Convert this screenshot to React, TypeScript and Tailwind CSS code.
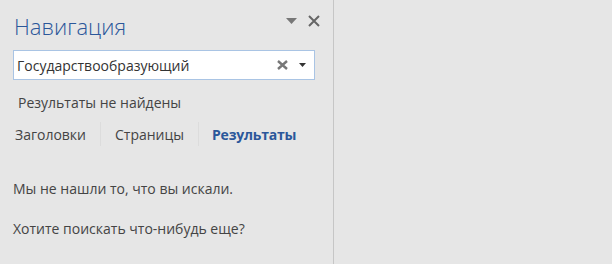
const App = () => {
  return (
    <div className="flex h-[264px] w-[612px] bg-[#e6e6e6] text-[#444]" style={{ fontFamily: '"Open Sans", "Noto Sans", sans-serif' }}>
      {/* Navigation pane */}
      <div className="relative w-[334px] shrink-0 border-r border-[#c6c6c6] pl-[13px]">
        {/* Header */}
        <div className="flex h-[48px] items-start pr-[13px]">
          <h1 className="pl-[1px] pt-[11px] text-[22px] font-light leading-[30px] text-[#2b579a]">Навигация</h1>
          <div className="ml-auto mt-[15px] flex items-center gap-[11px]">
            <svg width="11" height="6" viewBox="0 0 11 6"><path d="M0 0h11L5.5 6z" fill="#777" /></svg>
            <svg width="12" height="12" viewBox="0 0 12 12">
              <path d="M1 1l10 10M11 1L1 11" stroke="#666" strokeWidth="2" />
            </svg>
          </div>
        </div>

        {/* Search box */}
        <div className="mt-[2px] flex h-[30px] w-[302px] items-center border border-[#a9c4e4] bg-white pl-[3px] pr-[8px]">
          <span className="flex-1 text-[14px] text-[#333]">Государствообразующий</span>
          <svg width="11" height="10" viewBox="0 0 11 10" className="mr-[11px]">
            <path d="M1 1l9 8M10 1l-9 8" stroke="#777" strokeWidth="2.4" />
          </svg>
          <svg width="7" height="4" viewBox="0 0 7 4"><path d="M0 0h7L3.5 4z" fill="#333" /></svg>
        </div>

        <div className="mt-[13px] pl-[5px] text-[14px] leading-[20px] text-[#444]">Результаты не найдены</div>

        {/* Tabs */}
        <div className="mt-[9px] flex h-[24px] items-center text-[14px]">
          <span className="w-[87px] pl-[2px] text-[#444]">Заголовки</span>
          <span className="h-[24px] w-px bg-[#dcdcdc]" />
          <span className="w-[97px] pl-[14px] text-[#444]">Страницы</span>
          <span className="h-[24px] w-px bg-[#dcdcdc]" />
          <span className="pl-[13px] font-bold tracking-[-0.2px] text-[#2b579a]">Результаты</span>
        </div>

        <div className="mt-[33px] text-[14px] leading-[20px]">Мы не нашли то, что вы искали.</div>
        <div className="mt-[20px] text-[14px] leading-[20px]">Хотите поискать что-нибудь еще?</div>
      </div>

      {/* Document area */}
      <div className="flex-1" />
    </div>
  );
};

export default App;
